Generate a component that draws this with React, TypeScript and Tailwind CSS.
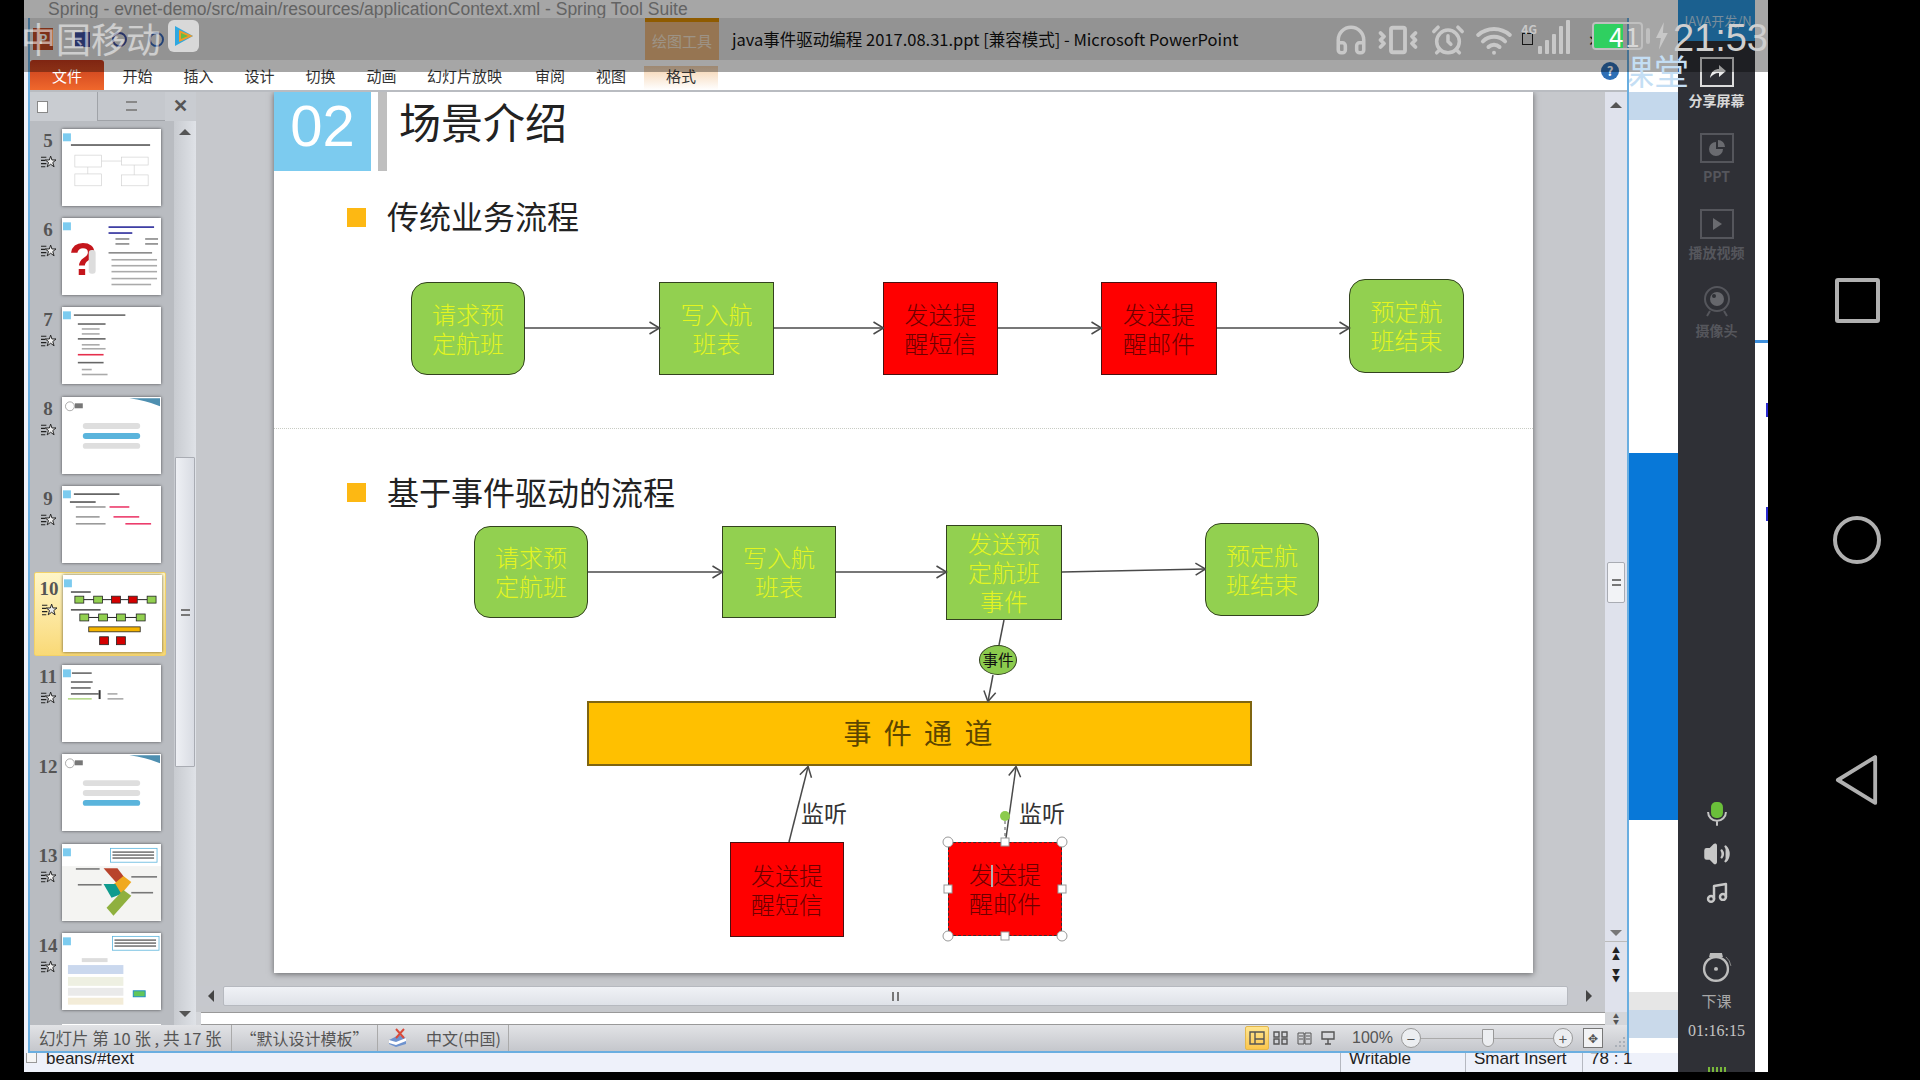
import { AlarmClock, Headphones, Music, Vibrate, Volume2, Wifi } from "lucide-react";

const CJK = "font-['Noto_Sans_CJK_SC','Liberation_Sans',sans-serif]";

const TABS = [
  { label: "开始", w: "w-[61px]" },
  { label: "插入", w: "w-[61px]" },
  { label: "设计", w: "w-[61px]" },
  { label: "切换", w: "w-[61px]" },
  { label: "动画", w: "w-[61px]" },
  { label: "幻灯片放映", w: "w-[105px]" },
  { label: "审阅", w: "w-[66px]" },
  { label: "视图", w: "w-[56px]" },
];

function Line({ x1, y1, x2, y2, arrow = true }: { x1: number; y1: number; x2: number; y2: number; arrow?: boolean }) {
  return <line x1={x1} y1={y1} x2={x2} y2={y2} stroke="#4a4a4a" strokeWidth="1.5" markerEnd={arrow ? "url(#open-arrow)" : undefined} />;
}

function FlowNode({ className, children }: { className: string; children: React.ReactNode }) {
  return (
    <div className={`absolute flex items-center justify-center border-[1.5px] pb-[2px] text-center text-[24px] font-light leading-[29px] ${className}`}>
      <span>{children}</span>
    </div>
  );
}

const GREEN = "border-[#33421f] bg-[#92d050] text-[#e4f520]";
const RED = "border-[#4a1010] bg-[#ff0000] text-[#6e0000]";
const RED_SELECTED = "border-dashed border-[#333] bg-[#ff0000] text-[#6e0000]";

function Slide() {
  return (
    <div className={`relative h-[881px] w-[1259px] bg-white shadow-[0_1px_6px_rgba(0,0,0,0.5)] ${CJK}`}>
      <div className="flex h-[79px]">
        <div className="flex w-[97px] items-center justify-center bg-[#7ccbef] pb-[12px] font-['Liberation_Sans',sans-serif] text-[58px] text-white">02</div>
        <div className="ml-[7px] w-[9px] bg-[#bfbfbf]" />
        <div className="pl-[12px] text-[42px] leading-[58px] text-[#222]">场景介绍</div>
      </div>

      <div className="absolute left-[73px] top-[116px] h-[19px] w-[19px] bg-[#fdb813]" />
      <div className="absolute left-[113px] top-[99px] text-[32px] leading-[48px] text-[#222]">传统业务流程</div>
      <div className="absolute left-0 right-0 top-[336px] border-t border-dotted border-[#c8ccc4]" />
      <div className="absolute left-[73px] top-[391px] h-[19px] w-[19px] bg-[#fdb813]" />
      <div className="absolute left-[113px] top-[375px] text-[32px] leading-[48px] text-[#222]">基于事件驱动的流程</div>

      <FlowNode className={`left-[137px] top-[190px] h-[93px] w-[114px] rounded-[16px] ${GREEN}`}>请求预<br />定航班</FlowNode>
      <FlowNode className={`left-[385px] top-[190px] h-[93px] w-[115px] ${GREEN}`}>写入航<br />班表</FlowNode>
      <FlowNode className={`left-[609px] top-[190px] h-[93px] w-[115px] ${RED}`}>发送提<br />醒短信</FlowNode>
      <FlowNode className={`left-[827px] top-[190px] h-[93px] w-[116px] ${RED}`}>发送提<br />醒邮件</FlowNode>
      <FlowNode className={`left-[1075px] top-[187px] h-[94px] w-[115px] rounded-[16px] ${GREEN}`}>预定航<br />班结束</FlowNode>

      <FlowNode className={`left-[200px] top-[434px] h-[92px] w-[114px] rounded-[16px] ${GREEN}`}>请求预<br />定航班</FlowNode>
      <FlowNode className={`left-[448px] top-[434px] h-[92px] w-[114px] ${GREEN}`}>写入航<br />班表</FlowNode>
      <FlowNode className={`left-[672px] top-[433px] h-[95px] w-[116px] ${GREEN}`}>发送预<br />定航班<br />事件</FlowNode>
      <FlowNode className={`left-[931px] top-[431px] h-[93px] w-[114px] rounded-[16px] ${GREEN}`}>预定航<br />班结束</FlowNode>

      <div className="absolute left-[705px] top-[553px] flex h-[30px] w-[38px] items-center justify-center rounded-[50%] border border-[#33421f] bg-[#8ccb4e] text-[15.5px] text-[#111]">事件</div>
      <div className="absolute left-[313px] top-[609px] flex h-[65px] w-[665px] items-center justify-center border-2 border-[#7f6510] bg-[#ffc000] pb-[3px] text-[28px] tracking-[3px] text-[#5c4500]">事 件 通 道</div>
      <FlowNode className={`left-[456px] top-[750px] h-[95px] w-[114px] ${RED}`}>发送提<br />醒短信</FlowNode>
      <FlowNode className={`left-[674px] top-[750px] h-[94px] w-[114px] ${RED_SELECTED}`}>发送提<br />醒邮件</FlowNode>
      <div className="absolute left-[527px] top-[703px] text-[23px] leading-[34px] text-[#333]">监听</div>
      <div className="absolute left-[745px] top-[703px] text-[23px] leading-[34px] text-[#333]">监听</div>

      <svg className="pointer-events-none absolute inset-0" width="1259" height="881">
        <defs>
          <marker id="open-arrow" markerWidth="12" markerHeight="14" refX="10.5" refY="7" orient="auto" markerUnits="userSpaceOnUse">
            <path d="M1 1 L11 7 L1 13" fill="none" stroke="#4a4a4a" strokeWidth="1.5" />
          </marker>
        </defs>
        <Line x1={251} y1={236} x2={385} y2={236} />
        <Line x1={500} y1={236} x2={609} y2={236} />
        <Line x1={724} y1={236} x2={827} y2={236} />
        <Line x1={943} y1={236} x2={1075} y2={236} />
        <Line x1={314} y1={480} x2={448} y2={480} />
        <Line x1={562} y1={480} x2={672} y2={480} />
        <Line x1={788} y1={480} x2={931} y2={477} />
        <Line x1={730} y1={528} x2={725} y2={553} arrow={false} />
        <Line x1={719} y1={583} x2={714} y2={609} />
        <Line x1={515} y1={750} x2={534} y2={675} />
        <Line x1={732} y1={746} x2={742} y2={675} />
        <line x1="731" y1="729" x2="731" y2="750" stroke="#555" strokeDasharray="3 3" />
        <circle cx="731" cy="724" r="5" fill="#8ccb4e" />
        <rect x="717" y="773" width="2" height="22" fill="#b0b0b0" />
        {[[674, 750], [788, 750], [674, 844], [788, 844]].map(([cx, cy]) => (
          <circle key={`${cx}-${cy}`} cx={cx} cy={cy} r="5" fill="#fff" stroke="#999" />
        ))}
        {[[731, 750], [674, 797], [788, 797], [731, 844]].map(([cx, cy]) => (
          <rect key={`${cx}-${cy}`} x={cx - 4} y={cy - 4} width="8" height="8" fill="#fff" stroke="#999" />
        ))}
      </svg>
    </div>
  );
}

function Bars({ rows, fill = "#9a9a9a" }: { rows: [number, number, number][]; fill?: string }) {
  return (
    <>
      {rows.map(([x, y, w]) => (
        <rect key={`${x}-${y}`} x={x} y={y} width={w} height="1.6" fill={fill} />
      ))}
    </>
  );
}

function Badge() {
  return <rect x="1" y="4" width="8" height="8" fill="#7ccbef" />;
}

function MenuSlide({ active }: { active: number }) {
  return (
    <>
      <circle cx="8" cy="9" r="4.5" fill="none" stroke="#888" strokeWidth="0.7" />
      <rect x="13" y="6" width="8" height="5" fill="#777" />
      <path d="M68 1 L99 1 L99 9 Q84 3 68 1Z" fill="#4e8fb0" />
      {[0, 1, 2].map((i) => (
        <rect key={i} x="21" y={26 + i * 10} width="58" height="6" rx="3" fill={i === active ? "#5ab4dc" : "#dedede"} />
      ))}
    </>
  );
}

const THUMBS: { n: number; star: boolean; art: React.ReactNode }[] = [
  { n: 5, star: true, art: (
    <>
      <Badge />
      <Bars rows={[[9, 15, 80]]} fill="#555" />
      <rect x="13" y="26" width="27" height="12" fill="none" stroke="#ccc" strokeWidth="0.6" />
      <rect x="60" y="28" width="27" height="8" fill="none" stroke="#ccc" strokeWidth="0.6" />
      <rect x="13" y="45" width="27" height="12" fill="none" stroke="#ccc" strokeWidth="0.6" />
      <rect x="60" y="46" width="27" height="11" fill="none" stroke="#ccc" strokeWidth="0.6" />
      <path d="M40 32 H60 M26 38 V45 M73 36 V46" stroke="#ccc" strokeWidth="0.6" />
    </>
  ) },
  { n: 6, star: true, art: (
    <>
      <Badge />
      <text x="7" y="57" fontSize="46" fontWeight="700" fill="#c4161c" fontFamily="Liberation Sans">?</text>
      <rect x="27" y="32" width="7" height="24" rx="3" fill="#ddd" />
      <Bars rows={[[47, 8, 46], [47, 14, 24]]} fill="#29299a" />
      <Bars rows={[[54, 20, 14], [84, 20, 13], [54, 25, 14], [84, 25, 13], [47, 34, 44]]} fill="#888" />
      <Bars rows={[[50, 41, 46], [50, 47, 46], [50, 53, 46], [50, 60, 46], [50, 66, 40]]} fill="#aaa" />
    </>
  ) },
  { n: 7, star: true, art: (
    <>
      <Badge />
      <Bars rows={[[12, 7, 52], [16, 16, 28], [16, 31, 28], [16, 55, 26]]} fill="#666" />
      <Bars rows={[[20, 21, 18], [20, 26, 18], [20, 37, 18], [20, 41, 24], [20, 62, 10], [20, 67, 26]]} fill="#aaa" />
      <Bars rows={[[16, 47, 26]]} fill="#e62f4c" />
    </>
  ) },
  { n: 8, star: true, art: <MenuSlide active={1} /> },
  { n: 9, star: true, art: (
    <>
      <Badge />
      <Bars rows={[[12, 7, 46], [8, 15, 26]]} fill="#555" />
      <Bars rows={[[14, 20, 30], [14, 30, 24], [14, 37, 30]]} fill="#999" />
      <Bars rows={[[48, 20, 20], [52, 30, 26], [64, 37, 26]]} fill="#ec3b6b" />
    </>
  ) },
  { n: 10, star: true, art: (
    <>
      <Badge />
      <Bars rows={[[8, 16, 20], [8, 34, 30]]} fill="#555" />
      {[12, 31, 49, 66, 85].map((x, i) => (
        <rect key={x} x={x} y="21" width="9" height="7" fill={i === 2 || i === 3 ? "#d40000" : "#92d050"} stroke="#222" strokeWidth="0.8" />
      ))}
      {[17, 36, 54, 74].map((x) => (
        <rect key={x} x={x} y="39" width="9" height="7" fill="#92d050" stroke="#222" strokeWidth="0.8" />
      ))}
      <path d="M21 24.5H31M40 24.5H49M58 24.5H66M75 24.5H85M26 42.5H36M45 42.5H54M63 42.5H74" stroke="#222" />
      <rect x="26" y="52" width="52" height="5" fill="#f5b400" stroke="#222" strokeWidth="0.8" />
      <rect x="37" y="62" width="9" height="8" fill="#d40000" stroke="#222" strokeWidth="0.8" />
      <rect x="54" y="62" width="9" height="8" fill="#d40000" stroke="#222" strokeWidth="0.8" />
    </>
  ) },
  { n: 11, star: true, art: (
    <>
      <Badge />
      <Bars rows={[[10, 7, 20], [9, 16, 22], [9, 22, 20], [9, 28, 28]]} fill="#666" />
      <Bars rows={[[46, 28, 10], [46, 33, 16]]} fill="#aaa" />
      <Bars rows={[[6, 33, 24]]} fill="#b4d88a" />
      <rect x="37" y="25" width="2" height="9" fill="#333" />
    </>
  ) },
  { n: 12, star: false, art: <MenuSlide active={2} /> },
  { n: 13, star: true, art: (
    <>
      <Badge />
      <rect x="49" y="4" width="47" height="14" fill="#fff" stroke="#5ab4dc" strokeWidth="0.8" />
      <Bars rows={[[51, 7, 42], [51, 10, 42], [51, 13, 42]]} fill="#777" />
      <rect x="0" y="22" width="100" height="55" fill="#f4f4f2" />
      <path d="M42 24 L56 24 L65 36 L56 40Z" fill="#b8432c" />
      <path d="M50 42 L62 32 L70 38 L60 50Z" fill="#f0a91e" />
      <path d="M42 40 L54 40 L60 50 L50 54Z" fill="#0f9b8e" />
      <path d="M45 64 L62 46 L70 52 L52 72Z" fill="#8fb03e" />
      <Bars rows={[[14, 24, 24], [16, 40, 24], [70, 32, 26], [70, 48, 22]]} fill="#777" />
    </>
  ) },
  { n: 14, star: true, art: (
    <>
      <Badge />
      <rect x="51" y="3" width="47" height="14" fill="#fff" stroke="#5ab4dc" strokeWidth="0.8" />
      <Bars rows={[[53, 6, 42], [53, 9, 42], [53, 12, 42]]} fill="#777" />
      <rect x="6" y="32" width="56" height="9" fill="#cad8ee" />
      <rect x="6" y="44" width="56" height="9" fill="#eef0e2" />
      <rect x="6" y="55" width="56" height="8" fill="#eaeaea" />
      <rect x="6" y="65" width="56" height="7" fill="#f3ecd8" />
      <rect x="72" y="58" width="12" height="6" fill="#61c65a" stroke="#1f8fc4" />
      <rect x="20" y="25" width="26" height="4" fill="#ddd" />
    </>
  ) },
];

function StarMark() {
  return (
    <svg width="15" height="14" viewBox="0 0 14 13" className="mt-[5px]">
      <path d="M0 2H5M0 5H4M0 8H5M0 11H4" stroke="#222" strokeWidth="1" />
      <path d="M9 1 L10.2 4.6 L14 4.6 L11 7 L12.2 11 L9 8.6 L5.8 11 L7 7 L4 4.6 L7.8 4.6Z" fill="#eee" stroke="#222" strokeWidth="0.9" />
    </svg>
  );
}

function SlidePanel() {
  return (
    <div className="flex h-full w-[166px] shrink-0 flex-col bg-[#b9bcc1]">
      <div className="flex h-[29px] shrink-0">
        <div className="flex w-[67px] items-center bg-[#c9ccd1] pl-[7px]">
          <div className="h-[12px] w-[11px] border border-[#888] bg-white" />
        </div>
        <div className="flex w-[68px] items-center justify-center border-b border-l border-[#a0a3a8] bg-[#c5c8cd]">
          <div className="h-[10px] w-[11px] border-y-2 border-double border-[#888]" />
        </div>
        <div className="flex w-[31px] items-center justify-center bg-[#c9ccd1] font-['Liberation_Sans',sans-serif] text-[18px] font-bold text-[#555]">✕</div>
      </div>
      <div className="flex h-[904px] overflow-hidden">
        <div className="w-[144px] shrink-0 pl-[4px] pt-[4px]">
          {THUMBS.map((t) => (
            <div key={t.n} className="h-[89.4px]">
              <div className={`flex h-[84px] w-[132px] items-center rounded-[2px] ${t.n === 10 ? "border border-[#f3d268] bg-gradient-to-b from-[#fff6c8] to-[#f9d976]" : ""}`}>
                <div className="flex w-[28px] shrink-0 flex-col items-center self-start pt-[6px]">
                  <span className="font-['Liberation_Serif',serif] text-[19px] font-bold leading-[19px] text-[#555]">{t.n}</span>
                  {t.star && <StarMark />}
                </div>
                <svg width="99" height="77" viewBox="0 0 100 77" className="shrink-0 bg-white shadow-[0_0_3px_rgba(0,0,0,0.6)]">
                  <g className="blur-[0.5px]">{t.art}</g>
                </svg>
              </div>
            </div>
          ))}
          <div className="ml-[28px] mt-[5px] h-[4px] w-[99px] bg-white" />
        </div>
        <div className="flex w-[22px] flex-col items-center bg-gradient-to-r from-[#c8cbd0] to-[#dfe2e7]">
          <div className="mt-[8px] h-0 w-0 border-x-[6px] border-b-[6px] border-x-transparent border-b-[#555]" />
          <div className="mt-[322px] flex h-[310px] w-[20px] items-center justify-center rounded-[1px] border border-[#a9acb3] bg-gradient-to-r from-[#eef0f4] to-[#d9dce3]">
            <span className="h-[7px] w-[9px] border-y-2 border-double border-[#777]" />
          </div>
          <div className="mt-[244px] h-0 w-0 border-x-[6px] border-t-[6px] border-x-transparent border-t-[#555]" />
        </div>
      </div>
    </div>
  );
}

function ViewIcon({ kind }: { kind: "normal" | "grid" | "read" | "show" }) {
  return (
    <svg width="18" height="16" viewBox="0 0 18 16" fill="none" stroke="#555" strokeWidth="1.4">
      {kind === "normal" && <path d="M2 2H16V14H2Z M7 2V14 M7 9H16" />}
      {kind === "grid" && <path d="M2 2H7V7H2Z M10 2H15V7H10Z M2 9H7V14H2Z M10 9H15V14H10Z" />}
      {kind === "read" && <path d="M2 3H8V14H2Z M9 3H15V14H9Z M3 6H7M3 9H7M10 6H14M10 9H14" strokeWidth="1" />}
      {kind === "show" && <path d="M3 2H15V9H3Z M9 9V14 M6 14H12" />}
    </svg>
  );
}

function StatusBar() {
  return (
    <div className={`flex h-[28px] shrink-0 items-center border-b-2 border-[#6aaee0] bg-gradient-to-b from-[#e2e3e6] to-[#c5c7cc] text-[16.5px] text-[#555] ${CJK}`}>
      <div className="flex h-full w-[202px] items-center whitespace-nowrap border-r border-[#aaa] pl-[9px]">幻灯片 第 10 张 , 共 17 张</div>
      <div className="flex h-full w-[146px] items-center justify-center whitespace-nowrap border-r border-[#aaa] text-[16px]">“默认设计模板”</div>
      <div className="flex h-full w-[131px] items-center border-r border-[#aaa] pl-[9px] text-[16px]">
        <svg width="22" height="22" viewBox="0 0 22 22" className="mr-[17px]">
          <path d="M2 13 L12 8 L19 11 L19 17 L9 20 L2 17Z" fill="#6f93cf" />
          <path d="M2 13 L9 15 L19 11 L19 14 L9 18 L2 16Z" fill="#fff" />
          <path d="M9 2 L17 11 M17 2 L9 11" stroke="#d94b3a" strokeWidth="2" />
        </svg>
        中文(中国)
      </div>
      <div className="ml-[736px] flex h-[24px] w-[24px] items-center justify-center rounded-[2px] border border-[#e4b84c] bg-gradient-to-b from-[#ffe58d] to-[#fbc64c]">
        <ViewIcon kind="normal" />
      </div>
      <div className="ml-[3px] flex w-[65px] justify-between">
        <ViewIcon kind="grid" />
        <ViewIcon kind="read" />
        <ViewIcon kind="show" />
      </div>
      <span className="ml-[15px] w-[40px] font-['Liberation_Sans',sans-serif] text-[16px]">100%</span>
      <div className="ml-[9px] flex h-[20px] w-[20px] items-center justify-center rounded-full border border-[#999] bg-[#eceef1] text-[15px] leading-none">−</div>
      <div className="relative h-px w-[132px] bg-[#aaa]">
        <div className="absolute left-[61px] top-[-9px] h-[18px] w-[12px] rounded-b-[6px] border border-[#999] bg-[#eceef1]" />
      </div>
      <div className="flex h-[20px] w-[20px] items-center justify-center rounded-full border border-[#999] bg-[#eceef1] text-[15px] leading-none">+</div>
      <div className="ml-[10px] flex h-[20px] w-[20px] items-center justify-center border border-[#777] bg-[#f2f3f5] text-[12px] leading-none">✥</div>
      <svg width="14" height="14" viewBox="0 0 14 14" className="ml-[9px] mt-[10px]" fill="#aab0b8">
        <path d="M11 1h2v2h-2zM7 5h2v2H7zM11 5h2v2h-2zM3 9h2v2H3zM7 9h2v2H7zM11 9h2v2h-2z" />
      </svg>
    </div>
  );
}

function PptWindow() {
  return (
    <div className={`flex h-full w-[1601px] shrink-0 flex-col border-x-2 border-[#6aaee0] bg-white ${CJK}`}>
      <div className="flex h-[42px] shrink-0 bg-[#e2e2e2]">
        <div className="flex items-center gap-[22px] pl-[3px]">
          <div className="flex h-[22px] w-[20px] items-center justify-center bg-[#c24b26] text-[13px] font-bold text-white">P</div>
          <div className="h-[15px] w-[15px] bg-[#3e4f9e]" />
          <div className="h-[15px] w-[15px] rounded-full border-2 border-[#3e4f9e]" />
          <div className="h-[15px] w-[15px] rounded-full border-2 border-[#3565b5]" />
        </div>
        <div className="ml-[481px] flex h-full w-[74px] flex-col bg-[#e7b47f]">
          <div className="h-[4px] bg-[#dc8c00]" />
          <div className="flex flex-1 items-center justify-center text-[15px] text-[#f2e2ce]">绘图工具</div>
        </div>
        <div className="ml-[13px] flex items-center whitespace-nowrap text-[16.5px] text-[#111]">java事件驱动编程 2017.08.31.ppt [兼容模式]  -  Microsoft PowerPoint</div>
        <div className="ml-auto flex items-center gap-[55px] pr-[26px] text-[#222]">
          <span className="h-[12px] w-[11px] border border-[#222]" />
          <span className="text-[15px] leading-none">✕</span>
        </div>
      </div>
      <div className="flex h-[32px] shrink-0 border-b-2 border-[#b9bcc1] bg-white text-[15px] text-[#333]">
        <div className="flex w-[74px] items-center justify-center rounded-t-[3px] bg-gradient-to-b from-[#c4391c] to-[#f0682c] pt-[3px] text-white">文件</div>
        <div className="flex pt-[6px]">
          <span className="w-[3px]" />
          {TABS.map((t) => (
            <div key={t.label} className={`text-center leading-[20px] ${t.w}`}>{t.label}</div>
          ))}
          <div className="ml-[5px] w-[74px] bg-gradient-to-b from-[#f4d2ae] to-white text-center leading-[20px]">格式</div>
        </div>
        <div className="ml-auto mr-[8px] mt-[2px] flex h-[18px] w-[18px] items-center justify-center rounded-full bg-[#2f6fb5] text-[13px] font-bold text-white">?</div>
      </div>
      <div className="flex h-[933px] shrink-0">
        <SlidePanel />
        <div className="flex w-[1431px] flex-col">
          <div className="flex h-[920px] shrink-0">
            <div className="flex w-[1409px] flex-col bg-[#c6c8cc]">
              <div className="h-[894px] overflow-hidden pl-[78px]">
                <Slide />
              </div>
              <div className="flex h-[20px] items-center bg-[#c6c8cd]">
                <div className="ml-[12px] h-0 w-0 border-y-[6px] border-r-[6px] border-y-transparent border-r-[#444]" />
                <div className="ml-[9px] flex h-[20px] w-[1345px] items-center justify-center rounded-[2px] border border-[#b6b9bf] bg-gradient-to-b from-[#f0f2f6] to-[#dfe2e8]">
                  <span className="h-[9px] w-[7px] border-x-2 border-double border-[#777]" />
                </div>
                <div className="ml-[18px] h-0 w-0 border-y-[6px] border-l-[6px] border-y-transparent border-l-[#444]" />
              </div>
            </div>
            <div className="flex w-[22px] flex-col items-center bg-[#dfe2ec]">
              <div className="mt-[10px] h-0 w-0 border-x-[6px] border-b-[6px] border-x-transparent border-b-[#555]" />
              <div className="mt-[454px] flex h-[41px] w-[18px] items-center justify-center rounded-[2px] border border-[#a9acb3] bg-[#f2f3f6]">
                <span className="h-[7px] w-[9px] border-y-2 border-double border-[#777]" />
              </div>
              <div className="mt-[327px] h-0 w-0 border-x-[6px] border-t-[6px] border-x-transparent border-t-[#777]" />
              <div className="mt-[5px] w-full border-t border-[#bbb] pt-[4px] text-center text-[8px] font-bold leading-[7px] text-[#222]">▲<br />▲</div>
              <div className="mt-[8px] text-[8px] font-bold leading-[7px] text-[#222]">▼<br />▼</div>
            </div>
          </div>
          <div className="flex h-[13px] shrink-0 bg-[#d4d6da] pl-[5px]">
            <div className="w-[1404px] border-y border-[#999] bg-white" />
            <div className="flex w-[22px] flex-col items-center justify-center text-[6px] leading-[6px] text-[#555]">
              <span>▲</span>
              <span>▼</span>
            </div>
          </div>
        </div>
      </div>
      <StatusBar />
    </div>
  );
}

function RailItem({ icon, label, className }: { icon: React.ReactNode; label: string; className: string }) {
  return (
    <div className={`flex flex-col items-center gap-[4px] ${className}`}>
      {icon}
      <span className="text-[14px] font-bold leading-[18px]">{label}</span>
    </div>
  );
}

function Sidebar() {
  return (
    <div className={`flex h-full w-[77px] shrink-0 flex-col items-center bg-[#2f3036] ${CJK}`}>
      <div className="flex h-[41px] w-full items-center justify-center overflow-hidden whitespace-nowrap bg-[#2a94dc] text-[13px] text-[#b8d8ee]">JAVA开发/N</div>
      <RailItem
        className="mt-[16px] text-[#d8d8d8]"
        label="分享屏幕"
        icon={
          <svg width="34" height="30" viewBox="0 0 34 30" fill="none">
            <rect x="1" y="1" width="32" height="28" stroke="#ddd" strokeWidth="2" />
            <path d="M10 21 C11 14 15 12 19 12 V8 L26 14 L19 20 V16 C15 16 12 18 10 21Z" fill="#eee" />
          </svg>
        }
      />
      <RailItem
        className="mt-[24px] text-[#55565c]"
        label="PPT"
        icon={
          <svg width="34" height="30" viewBox="0 0 34 30" fill="none">
            <rect x="1" y="1" width="32" height="28" stroke="#55565c" strokeWidth="2" />
            <path d="M16 9 A7 7 0 1 0 23 16 H16Z M18 7 A7 7 0 0 1 25 14 H18Z" fill="#6a6b70" />
          </svg>
        }
      />
      <RailItem
        className="mt-[24px] text-[#55565c]"
        label="播放视频"
        icon={
          <svg width="34" height="30" viewBox="0 0 34 30" fill="none">
            <rect x="1" y="1" width="32" height="28" stroke="#55565c" strokeWidth="2" />
            <path d="M13 9 L22 15 L13 21Z" fill="#6a6b70" />
          </svg>
        }
      />
      <RailItem
        className="mt-[24px] text-[#55565c]"
        label="摄像头"
        icon={
          <svg width="28" height="32" viewBox="0 0 28 32" fill="none">
            <circle cx="14" cy="14" r="12" stroke="#55565c" strokeWidth="2" />
            <circle cx="14" cy="14" r="7" fill="#66676c" />
            <circle cx="11" cy="11" r="2" fill="#2f3036" />
            <path d="M7 26 L4 31 M21 26 L24 31" stroke="#55565c" strokeWidth="2" />
          </svg>
        }
      />
      <svg width="22" height="26" viewBox="0 0 22 26" className="mt-[462px]" fill="none">
        <rect x="5" y="1" width="12" height="16" rx="5" fill="#6abf3a" />
        <path d="M2 11 A9 9 0 0 0 20 11 M11 20 V25" stroke="#c4c4c4" strokeWidth="2" />
      </svg>
      <Volume2 size={28} className="mt-[13px] fill-[#c8c8c8] text-[#c8c8c8]" />
      <Music size={24} className="mt-[14px] text-[#c8c8c8]" strokeWidth={2.5} />
      <svg width="32" height="32" viewBox="0 0 32 32" fill="none" className="mt-[46px]">
        <circle cx="15" cy="18" r="12" stroke="#bdbdbd" strokeWidth="2.4" />
        <circle cx="15" cy="18" r="2" fill="#bdbdbd" />
        <path d="M8 6 L9 2 H21 L22 6Z" fill="#bdbdbd" />
        <path d="M25 6 A14 14 0 0 1 30 15" stroke="#888" />
      </svg>
      <span className="mt-[6px] text-[15px] leading-[24px] text-[#a8a8a8]">下课</span>
      <span className="mt-[8px] font-['Liberation_Serif',serif] text-[16px] leading-[20px] text-[#c4c4c4]">01:16:15</span>
      <div className="mt-[26px] flex gap-[2px]">
        {[0, 1, 2, 3, 4].map((i) => (
          <span key={i} className="h-[5px] w-[2px] bg-[#79b83a]" />
        ))}
      </div>
    </div>
  );
}

function PhoneStatusOverlay() {
  return (
    <div className={`absolute left-0 top-0 flex h-[72px] w-[1768px] items-start overflow-hidden bg-black/35 text-[#d4d4d4] ${CJK}`}>
      <span className="ml-[21px] mt-[16px] whitespace-nowrap text-[35px] leading-[44px] text-white/55">中国移动</span>
      <div className="ml-[7px] mt-[20px] flex h-[32px] w-[32px] items-center justify-center rounded-[6px] bg-[#d8d8d8]">
        <svg width="22" height="24" viewBox="0 0 22 24">
          <path d="M2 2 L20 12 L2 22Z" fill="#2fa8e0" />
          <path d="M6 6 L20 12 L6 18Z" fill="#f09a28" />
          <path d="M8 9 L15 12 L8 15Z" fill="#66bb44" />
        </svg>
      </div>
      <div className="ml-[1135px] mt-[19px] flex items-center text-[#c8c8c8]">
        <Headphones size={34} strokeWidth={2.5} />
        <Vibrate size={42} strokeWidth={2.2} className="ml-[9px]" />
        <AlarmClock size={34} strokeWidth={2.5} className="ml-[12px]" />
        <Wifi size={38} strokeWidth={2.5} className="ml-[10px]" />
      </div>
      <div className="ml-[8px] mt-[18px] flex h-[36px] items-end gap-[3px] text-[#c8c8c8]">
        <span className="mb-[18px] w-[14px] text-[12px] font-bold leading-[14px]">4G</span>
        {["h-[8px]", "h-[14px]", "h-[20px]", "h-[28px]", "h-[34px]"].map((h) => (
          <span key={h} className={`w-[4px] rounded-[1px] bg-current ${h}`} />
        ))}
      </div>
      <div className="ml-[22px] mt-[22px] flex h-[28px] w-[52px] overflow-hidden rounded-[4px] border-2 border-[#c0c0c0]">
        <div className="flex w-[29px] items-center justify-end bg-[#2fd060] text-[26px] leading-none text-white">4</div>
        <div className="flex items-center pl-[2px] text-[26px] leading-none text-[#d8d8d8]">1</div>
      </div>
      <span className="ml-[3px] mt-[28px] h-[16px] w-[4px] rounded-[2px] bg-[#c0c0c0]" />
      <svg width="14" height="28" viewBox="0 0 14 28" className="ml-[5px] mt-[22px]">
        <path d="M9 0 L1 16 H6 L4 28 L13 11 H8Z" fill="#c8c8c8" />
      </svg>
      <span className="ml-[4px] mt-[16px] whitespace-nowrap font-['Liberation_Sans',sans-serif] text-[38px] leading-[44px] text-[#cfcfcf]">21:53</span>
    </div>
  );
}

export default function App() {
  return (
    <div className="relative h-[1080px] w-[1920px] overflow-hidden bg-black">
      <div className="flex h-[1072px] pl-[24px]">
        <div className="flex w-[1654px] shrink-0 flex-col bg-[#eef1fa]">
          <div className="flex h-[18px] shrink-0 items-center whitespace-nowrap bg-white pl-[24px] font-['Liberation_Sans',sans-serif] text-[17.5px] text-[#999]">
            Spring - evnet-demo/src/main/resources/applicationContext.xml - Spring Tool Suite
          </div>
          <div className="flex h-[1035px] shrink-0 pl-[4px]">
            <PptWindow />
            <div className="flex w-[49px] flex-col bg-white">
              <div className="mt-[74px] h-[28px] bg-[#c4d8ec]" />
              <div className="mt-[333px] h-[367px] bg-[#0878d8]" />
              <div className="mt-[172px] h-[18px] bg-[#e6e6e6]" />
              <div className="h-[28px] bg-[#c9d9ea]" />
            </div>
          </div>
          <div className="flex h-[19px] shrink-0 items-start overflow-hidden bg-[#eef1fa] font-['Liberation_Sans',sans-serif] text-[17px] leading-[11px] text-[#222]">
            <div className="flex h-[19px] w-[1316px] items-start">
              <div className="ml-[2px] h-[10px] w-[11px] border border-t-0 border-[#999] bg-[#f5f5f5]" />
              <span className="ml-[9px]">beans/#text</span>
            </div>
            <span className="h-[19px] w-[125px] border-l border-[#b5b8c0] pl-[8px]">Writable</span>
            <span className="h-[19px] w-[117px] border-l border-[#b5b8c0] pl-[8px]">Smart Insert</span>
            <span className="h-[19px] border-l border-[#b5b8c0] pl-[7px]">78 : 1</span>
          </div>
        </div>
        <Sidebar />
        <div className="flex w-[13px] shrink-0 flex-col bg-white">
          <div className="mt-[340px] h-[3px] bg-[#3d8fdc]" />
          <div className="ml-auto mt-[60px] h-[14px] w-[2px] bg-[#2a2ad0]" />
          <div className="ml-auto mt-[90px] h-[14px] w-[2px] bg-[#2a2ad0]" />
        </div>
      </div>
      <PhoneStatusOverlay />
      <div className={`absolute left-[1629px] top-[48px] flex w-[60px] justify-end overflow-hidden whitespace-nowrap text-[35px] leading-[44px] text-[#c4def4] ${CJK}`}>课堂</div>
      <nav className="absolute left-[1768px] top-[180px] flex w-[152px] flex-col items-center pl-[26px]">
        <div className="flex h-[240px] items-center">
          <div className="h-[45px] w-[45px] rounded-[3px] border-[4px] border-[#b0b0b0]" />
        </div>
        <div className="flex h-[240px] items-center">
          <div className="h-[48px] w-[48px] rounded-full border-[4px] border-[#b0b0b0]" />
        </div>
        <div className="flex h-[240px] items-center">
          <svg width="44" height="52" viewBox="0 0 46 54" fill="none">
            <path d="M42 3 V51 L3 27Z" stroke="#b0b0b0" strokeWidth="4" strokeLinejoin="round" />
          </svg>
        </div>
      </nav>
    </div>
  );
}
